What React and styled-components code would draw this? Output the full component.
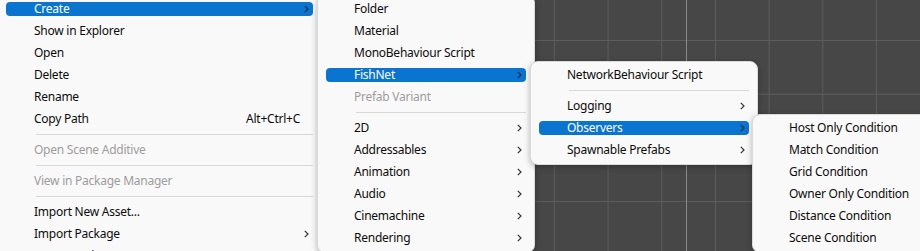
import React from "react";
import styled, { createGlobalStyle } from "styled-components";

const GlobalStyle = createGlobalStyle`
  body {
    margin: 0;
    background: #474747;
  }
`;

const Canvas = styled.div`
  position: relative;
  width: 920px;
  height: 251px;
  overflow: hidden;
  font-family: "Noto Sans", "Liberation Sans", sans-serif;
  font-size: 12px;
  letter-spacing: -0.25px;
  background-color: #474747;
  background-image:
    linear-gradient(to right, transparent 686px, #8a8a8a 686px, #8a8a8a 687px, transparent 687px),
    linear-gradient(to right, #5c5c5c 1px, transparent 1px),
    linear-gradient(to bottom, #5c5c5c 1px, transparent 1px);
  background-size: 100% 100%, 53.7px 53.7px, 53.7px 53.7px;
  background-position: 0 0, 17px 0, 0 40px;
  background-repeat: no-repeat, repeat, repeat;
`;

const Menu = styled.div`
  position: absolute;
  left: ${(p) => p.$left}px;
  top: ${(p) => p.$top}px;
  width: ${(p) => p.$width}px;
  padding: 2px 0 3px;
  background: #f9f9f9;
  border: 1px solid #dadada;
  border-radius: 8px;
  box-shadow: 0 2px 6px rgba(0, 0, 0, 0.28);
  box-sizing: border-box;
`;

const Item = styled.div`
  height: 22px;
  display: flex;
  align-items: center;
  padding: 0 8px;
`;

const Bar = styled.div`
  flex: 1;
  height: 14px;
  display: flex;
  align-items: center;
  padding: 0 3px 0 28px;
  border-radius: 4px;
  background: ${(p) => (p.$active ? "#0a74d1" : "transparent")};
  color: ${(p) => (p.$active ? "#ffffff" : p.$disabled ? "#9d9d9d" : "#0c0c0c")};
  line-height: 14px;
  white-space: nowrap;
`;

const Label = styled.span`
  flex: 1;
`;

const Shortcut = styled.span`
  margin-right: 2px;
`;

const ArrowSlot = styled.span`
  width: 8px;
  display: flex;
  justify-content: center;
  color: ${(p) => (p.$active ? "#1a2a3a" : "#333333")};
`;

const Separator = styled.div`
  height: 9px;
  display: flex;
  align-items: center;
  margin: 0 8px 0 38px;

  &::after {
    content: "";
    flex: 1;
    height: 1px;
    background: #d8d8d8;
  }
`;

const Chevron = () => (
  <svg width="5" height="8" viewBox="0 0 5 8">
    <polyline points="0.8,0.8 4,4 0.8,7.2" fill="none" stroke="currentColor" strokeWidth="1.2" />
  </svg>
);

const menus = [
  {
    left: -3,
    top: -5,
    width: 325,
    items: [
      { label: "Create", sub: true, active: true },
      { label: "Show in Explorer" },
      { label: "Open" },
      { label: "Delete" },
      { label: "Rename" },
      { label: "Copy Path", shortcut: "Alt+Ctrl+C" },
      "sep",
      { label: "Open Scene Additive", disabled: true },
      "sep",
      { label: "View in Package Manager", disabled: true },
      "sep",
      { label: "Import New Asset..." },
      { label: "Import Package", sub: true },
      { label: "Export Package..." },
    ],
  },
  {
    left: 317,
    top: -5,
    width: 218,
    items: [
      { label: "Folder" },
      { label: "Material" },
      { label: "MonoBehaviour Script" },
      { label: "FishNet", sub: true, active: true },
      { label: "Prefab Variant", disabled: true },
      "sep",
      { label: "2D", sub: true },
      { label: "Addressables", sub: true },
      { label: "Animation", sub: true },
      { label: "Audio", sub: true },
      { label: "Cinemachine", sub: true },
      { label: "Rendering", sub: true },
    ],
  },
  {
    left: 530,
    top: 61,
    width: 228,
    items: [
      { label: "NetworkBehaviour Script" },
      "sep",
      { label: "Logging", sub: true },
      { label: "Observers", sub: true, active: true },
      { label: "Spawnable Prefabs", sub: true },
    ],
  },
  {
    left: 752,
    top: 114,
    width: 200,
    items: [
      { label: "Host Only Condition" },
      { label: "Match Condition" },
      { label: "Grid Condition" },
      { label: "Owner Only Condition" },
      { label: "Distance Condition" },
      { label: "Scene Condition" },
    ],
  },
];

const App = () => {
  return (
    <>
      <GlobalStyle />
      <Canvas>
        {menus.map((m, i) => (
          <Menu key={i} $left={m.left} $top={m.top} $width={m.width}>
            {m.items.map((it, j) =>
              it === "sep" ? (
                <Separator key={j} />
              ) : (
                <Item key={j}>
                  <Bar $active={it.active} $disabled={it.disabled}>
                    <Label>{it.label}</Label>
                    {it.shortcut && <Shortcut>{it.shortcut}</Shortcut>}
                    <ArrowSlot $active={it.active}>{it.sub && <Chevron />}</ArrowSlot>
                  </Bar>
                </Item>
              )
            )}
          </Menu>
        ))}
      </Canvas>
    </>
  );
};

export default App;
